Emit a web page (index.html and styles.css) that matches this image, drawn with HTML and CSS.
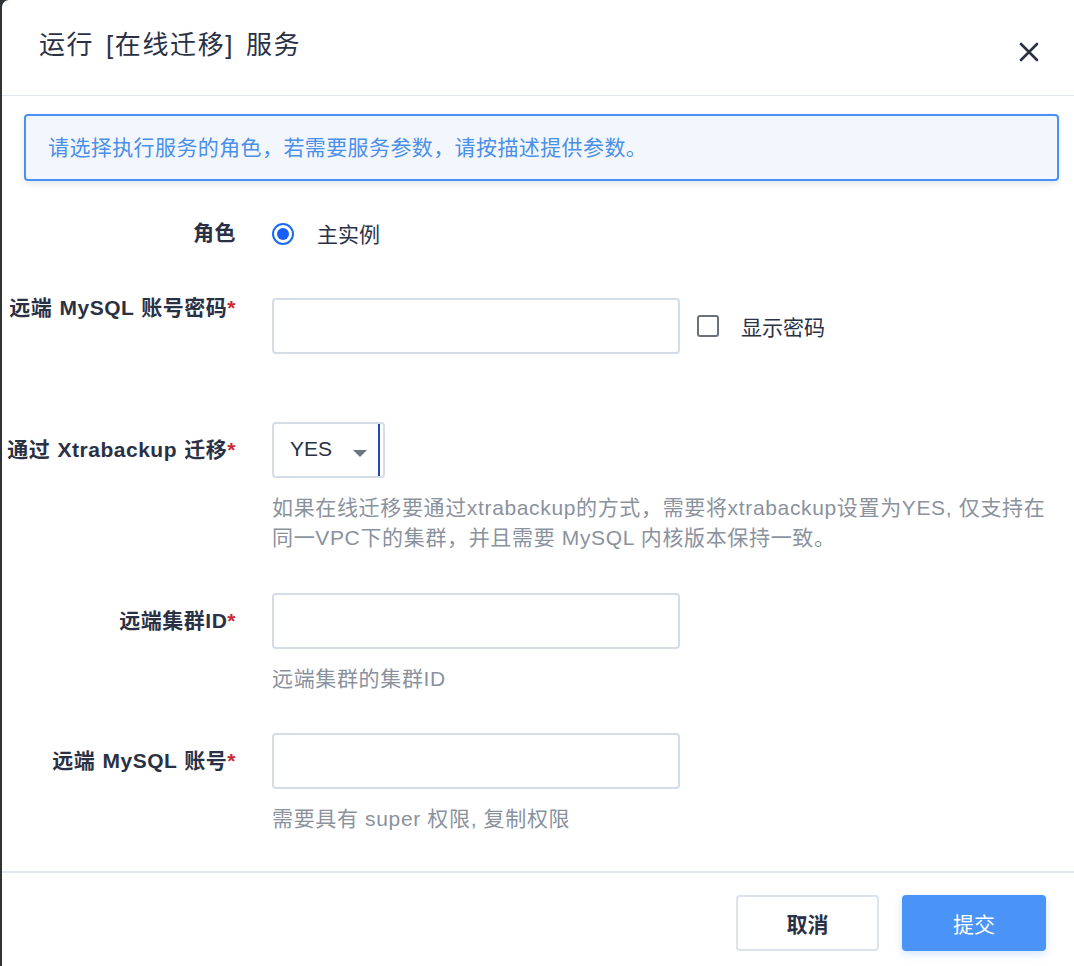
FILE: index.html
```html
<!DOCTYPE html>
<html lang="zh-CN">
<head>
<meta charset="utf-8">
<title>运行 [在线迁移] 服务</title>
<link rel="stylesheet" href="styles.css">
</head>
<body>
<div class="modal">
  <div class="modal-header">
    <h1 class="modal-title">运行 [在线迁移] 服务</h1>
    <button class="close-btn" aria-label="关闭">
      <svg width="20" height="20" viewBox="0 0 20 20"><path d="M2 2 L18 18 M18 2 L2 18" stroke="#2a3145" stroke-width="2.6" stroke-linecap="round" fill="none"/></svg>
    </button>
  </div>
  <div class="modal-body">
    <div class="info-box">请选择执行服务的角色，若需要服务参数，请按描述提供参数。</div>

    <div class="form-row row-role">
      <div class="label">角色</div>
      <div class="control">
        <label class="radio"><span class="radio-dot"></span><span>主实例</span></label>
      </div>
    </div>

    <div class="form-row row-password">
      <div class="label label-high">远端 MySQL 账号密码<span class="req">*</span></div>
      <div class="control control-inline">
        <div class="input"></div>
        <label class="checkbox"><span class="check-box"></span><span>显示密码</span></label>
      </div>
    </div>

    <div class="form-row row-select">
      <div class="label">通过 Xtrabackup 迁移<span class="req">*</span></div>
      <div class="control">
        <div class="select"><span class="select-value">YES</span><span class="caret"></span><span class="cursor"></span></div>
        <div class="help">如果在线迁移要通过xtrabackup的方式，需要将xtrabackup设置为YES, 仅支持在同一VPC下的集群，并且需要 MySQL 内核版本保持一致。</div>
      </div>
    </div>

    <div class="form-row row-cluster">
      <div class="label">远端集群ID<span class="req">*</span></div>
      <div class="control">
        <div class="input"></div>
        <div class="help">远端集群的集群ID</div>
      </div>
    </div>

    <div class="form-row row-account">
      <div class="label">远端 MySQL 账号<span class="req">*</span></div>
      <div class="control">
        <div class="input"></div>
        <div class="help">需要具有 super 权限, 复制权限</div>
      </div>
    </div>
  </div>
  <div class="modal-footer">
    <button class="btn btn-cancel">取消</button>
    <button class="btn btn-submit">提交</button>
  </div>
</div>
</body>
</html>
```

FILE: styles.css
```css
* { box-sizing: border-box; }
html, body {
  margin: 0;
  padding: 0;
  background: #2f3338;
  font-family: "Liberation Sans", "Noto Sans CJK SC", sans-serif;
  color: #2a3145;
}
.modal {
  margin-left: 2px;
  width: 1072px;
  height: 966px;
  background: #fff;
  border-top-left-radius: 7px;
  display: flex;
  flex-direction: column;
}
.modal-header {
  height: 96px;
  border-bottom: 1px solid #dfe6ee;
  display: flex;
  align-items: center;
  justify-content: space-between;
  padding: 0 35px 0 37px;
}
.modal-title {
  margin: 0 0 6px 0;
  font-size: 26px;
  font-weight: 400;
  letter-spacing: 1.6px;
  word-spacing: 3px;
  color: #2a3145;
  line-height: 34px;
}
.close-btn {
  background: none;
  border: 0;
  padding: 0;
  width: 20px;
  height: 20px;
  margin-top: 8px;
  display: block;
}
.close-btn svg { display: block; }
.modal-body {
  flex: 1;
  padding: 18px 15px 0 22px;
}
.info-box {
  height: 67px;
  border: 2px solid #4b91f1;
  border-radius: 4px;
  background: #f3f7fd;
  box-shadow: 0 3px 6px rgba(40, 60, 90, 0.12);
  color: #4a8fe9;
  font-size: 21px;
  letter-spacing: 0.4px;
  line-height: 64px;
  padding-left: 22px;
}
.form-row {
  display: flex;
  margin-left: -22px;
}
.label {
  width: 234px;
  flex: none;
  text-align: right;
  font-size: 21px;
  font-weight: 700;
  letter-spacing: 0.5px;
  word-spacing: 1px;
  line-height: 55px;
  color: #2a3145;
  white-space: nowrap;
}
.label-high { line-height: 22px; margin-top: -1px; }
.req { color: #c9282e; }
.control {
  margin-left: 36px;
  flex: 1;
}
.control-inline {
  display: flex;
  align-items: center;
}
.row-role { margin-top: 37px; }
.row-role .label { line-height: 30px; }
.radio {
  display: flex;
  align-items: center;
  height: 30px;
  font-size: 21px;
  color: #2a3145;
}
.radio-dot {
  width: 22px;
  height: 22px;
  border-radius: 50%;
  border: 2px solid #1a6cf5;
  background: #fff;
  position: relative;
  margin-right: 23px;
  margin-top: 1px;
}
.radio-dot::after {
  content: "";
  position: absolute;
  left: 3px;
  top: 3px;
  width: 12px;
  height: 12px;
  border-radius: 50%;
  background: #1a5ff5;
}
.row-password { margin-top: 50px; }
.input {
  width: 408px;
  height: 56px;
  border: 2px solid #d3dce7;
  border-radius: 4px;
  background: #fff;
}
.checkbox {
  display: flex;
  align-items: center;
  margin-left: 17px;
  font-size: 21px;
  color: #2a3145;
}
.check-box {
  width: 22px;
  height: 22px;
  border: 2px solid #6c7078;
  border-radius: 3px;
  margin-right: 22px;
}
.row-select { margin-top: 68px; }
.select {
  width: 113px;
  height: 56px;
  border: 2px solid #d3dce7;
  border-radius: 4px;
  display: flex;
  align-items: center;
  padding-left: 16px;
  font-size: 21px;
  color: #2a3145;
}
.select-value { margin-top: -2px; }
.caret {
  width: 0;
  height: 0;
  border-left: 7px solid transparent;
  border-right: 7px solid transparent;
  border-top: 7px solid #6b7280;
  margin-left: 21px;
  margin-top: 6px;
}
.cursor {
  width: 2px;
  align-self: stretch;
  background: #1e47c8;
  margin-left: auto;
  margin-right: 3px;
}
.help {
  margin-top: 15px;
  font-size: 21px;
  letter-spacing: 0.65px;
  line-height: 30px;
  color: #8a929e;
  max-width: 782px;
}
.row-cluster { margin-top: 40px; }
.row-account { margin-top: 39px; }
.modal-footer {
  height: 95px;
  border-top: 2px solid #e1e7ef;
  display: flex;
  justify-content: flex-end;
  align-items: flex-start;
  padding: 22px 28px 0 0;
  gap: 23px;
}
.btn {
  height: 56px;
  border-radius: 4px;
  font-family: "Liberation Sans", "Noto Sans CJK SC", sans-serif;
  font-size: 21px;
  padding: 0;
}
.btn-cancel {
  width: 143px;
  background: #fff;
  border: 2px solid #dce3ec;
  color: #2a3145;
  font-weight: 700;
}
.btn-submit {
  width: 144px;
  background: #4a94f8;
  border: 0;
  color: #fff;
  box-shadow: 0 3px 8px rgba(74, 148, 248, 0.25);
}
```
